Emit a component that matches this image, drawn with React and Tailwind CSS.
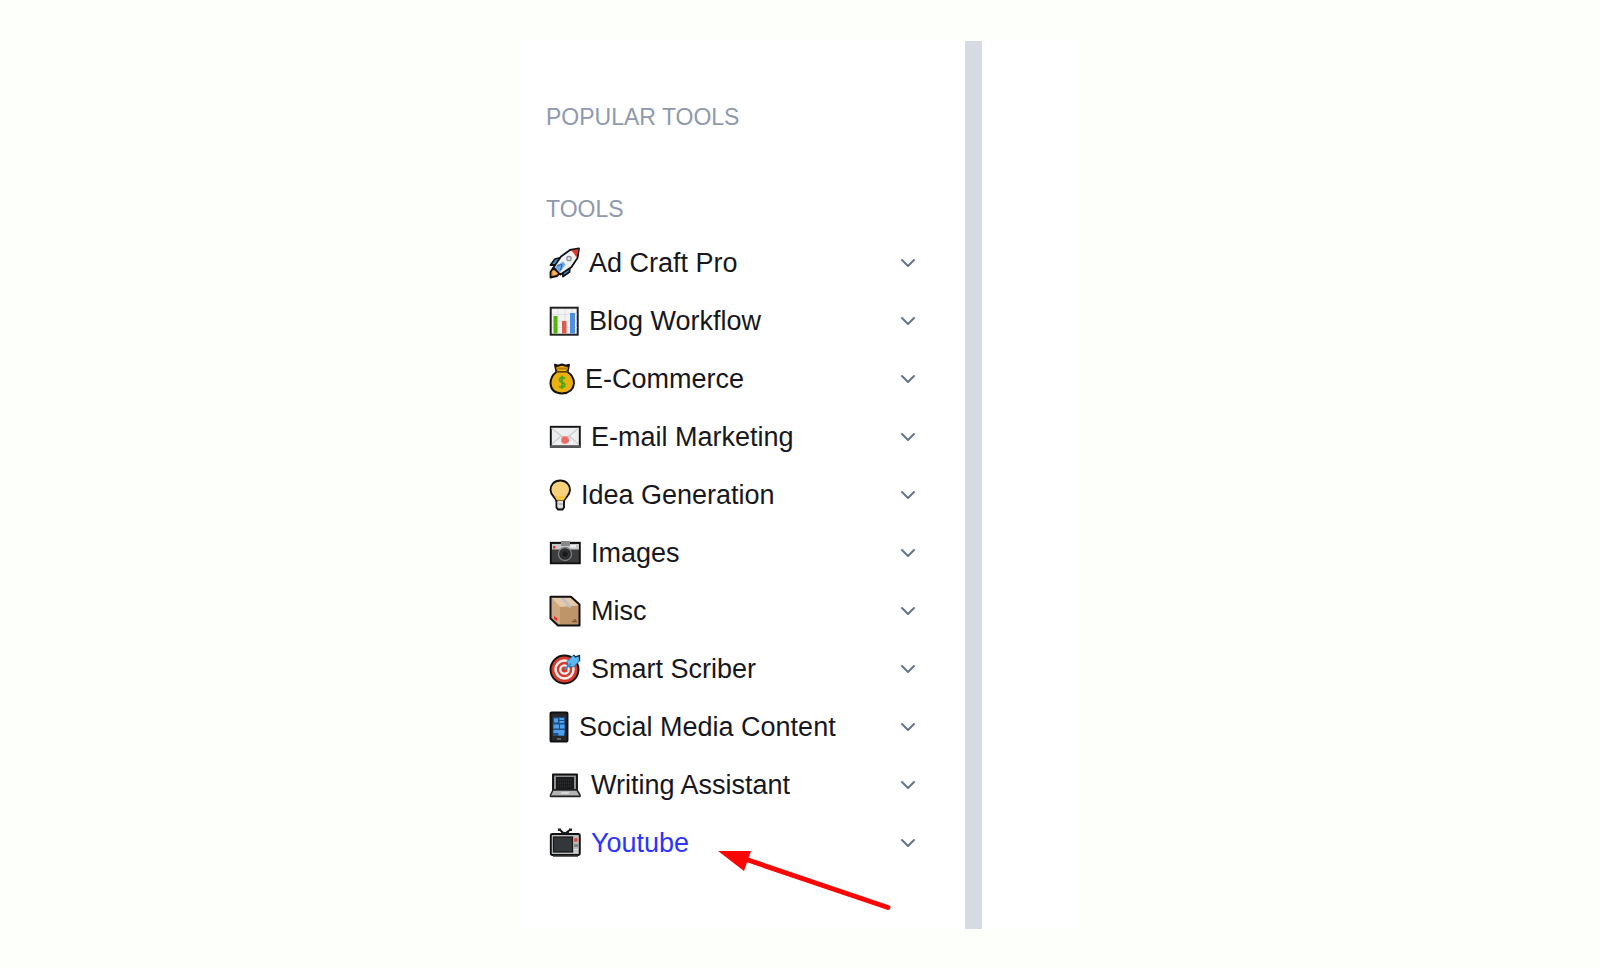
import React from "react";
import { ChevronDown } from "lucide-react";

function Rocket() {
  return (
    <svg aria-hidden="true" className="h-8 w-[31px] shrink-0" viewBox="0 0 31 32" strokeLinejoin="round">
      <path d="M4 21 L1.500 25 L1.500 30.500 L8 29 L11 26 Z" fill="#f08a24" stroke="#111" strokeWidth="1.800" />
      <path d="M3.500 24.500 L6 24 L8 27 L4 28Z" fill="#ffc24a" />
      <path d="M12 10.500 L6 12 L1.500 18 L8 18 Z M21 19 L20.500 25 L14 29.500 L13.500 24 Z" fill="#4a92e4" stroke="#111" strokeWidth="1.800" />
      <path d="M30 1.500 L21 3 L12 9.500 L4.500 20.500 L11.500 27.500 L22.500 20 L28.500 11 Z" fill="#f0f1f2" stroke="#111" strokeWidth="1.800" />
      <path d="M29.500 2 L22 3.500 Q25 6 27.500 10.500 Z" fill="#d8392c" />
      <path d="M6 20 L14 14.500 L16.500 17.500 L10.500 26Z" fill="#6aa9ec" />
      <path d="M8 18.500 L13 17.500 L11.500 23" fill="none" stroke="#265e9e" strokeWidth="1" />
      <circle cx="20" cy="11.500" r="2.200" fill="#dfe1e3" stroke="#8d9197" strokeWidth="1.300" />
    </svg>
  );
}

function Chart() {
  return (
    <svg aria-hidden="true" className="h-8 w-[31px] shrink-0" viewBox="0 0 31 32">
      <rect x="1.700" y="2.700" width="27" height="27" fill="#f3f3f4" stroke="#222" strokeWidth="2" />
      <path d="M3 9.500H28M3 16H28M3 22.500H28M9 4V29M16 4V29M23 4V29" stroke="#dedfe1" strokeWidth="1" />
      <rect x="4.500" y="11" width="4" height="17.500" fill="#56b30b" />
      <rect x="13" y="16" width="4.500" height="12.500" fill="#dd5b4e" />
      <rect x="21" y="8" width="5" height="20.500" fill="#4f8fe0" />
    </svg>
  );
}

function MoneyBag() {
  return (
    <svg aria-hidden="true" className="h-8 w-[27px] shrink-0" viewBox="0 0 27 32">
      <path d="M6 1.800 L9 2.800 L13 1.500 L17 2.800 L20 1.800 L18.500 9 Q25 13 25 20.500 Q24 30 13 30.500 Q2 30 1.500 20.500 Q1.500 13 7.500 9 Z" fill="#edb10d" stroke="#111" strokeWidth="2" strokeLinejoin="round" />
      <path d="M7 5.500 L19 5.500" stroke="#b87b08" strokeWidth="2" />
      <path d="M7 8.800H19" stroke="#5b3f07" strokeWidth="1.600" />
      <path d="M16 15.500 Q13 13.500 10.800 15.500 Q9.800 18.500 13 19.300 Q16.500 20.200 15.500 23 Q13 25.500 10 23.200 M13 12.800V26" fill="none" stroke="#4aa818" strokeWidth="1.900" />
    </svg>
  );
}

function Mail() {
  return (
    <svg aria-hidden="true" className="h-8 w-[33px] shrink-0" viewBox="0 0 33 32">
      <rect x="1.800" y="5.800" width="29" height="20" fill="#eeeff0" stroke="#111" strokeWidth="1.900" />
      <path d="M2.500 7 L16 18 L30 7 M3 23 L12 15 M29.500 23 L20 15" fill="none" stroke="#c9cbcd" strokeWidth="1.200" />
      <path d="M1 25.500H31.500" stroke="#56585a" strokeWidth="2.600" />
      <circle cx="16" cy="19" r="4" fill="#f07c76" />
      <circle cx="16" cy="19" r="1.600" fill="none" stroke="#e2605a" strokeWidth="1.200" />
      <path d="M17.600 17.500V20Q19 21 19.500 19" fill="none" stroke="#e2605a" strokeWidth="1" />
    </svg>
  );
}

function Bulb() {
  return (
    <svg aria-hidden="true" className="h-8 w-[23px] shrink-0" viewBox="0 0 23 32">
      <path d="M7.500 22V28.500L9 30.500H13.500L15 28.500V22Z" fill="#cfd1d4" stroke="#111" strokeWidth="1.900" />
      <path d="M11.300 1.500 C5 1.500 1.500 6 1.500 11 C1.500 16.500 6.500 18 7.500 22H15C16 18 21 16.500 21 11C21 6 17.500 1.500 11.300 1.500Z" fill="#f8d27a" stroke="#111" strokeWidth="1.900" />
      <path d="M5 16 Q11 19 18 16 L14.500 21.500H8Z" fill="#f8c63c" />
      <path d="M8.500 22H14V28H8.500Z" fill="#e3e4e6" />
      <path d="M8.500 25H14" stroke="#9b9fa4" strokeWidth="1" />
    </svg>
  );
}

function Camera() {
  return (
    <svg aria-hidden="true" className="h-8 w-[33px] shrink-0" viewBox="0 0 33 32">
      <rect x="12" y="4" width="9" height="4" fill="#77797b" />
      <rect x="1.800" y="5.800" width="29" height="20.500" fill="#3b3d3f" stroke="#111" strokeWidth="1.900" />
      <rect x="3" y="7" width="27" height="5.500" fill="#c5c7c9" />
      <rect x="4" y="9" width="2.500" height="2.500" fill="#db372d" />
      <rect x="12" y="4" width="9" height="5" fill="#87898b" />
      <rect x="21" y="8" width="6" height="2.500" fill="#eeeeee" />
      <circle cx="16" cy="17" r="6.500" fill="#292b2d" stroke="#808284" strokeWidth="1.300" />
      <circle cx="16" cy="17" r="3.500" fill="#17191a" stroke="#383b3e" strokeWidth="1" />
    </svg>
  );
}

function Box() {
  return (
    <svg aria-hidden="true" className="h-8 w-[33px] shrink-0" viewBox="0 0 33 32" strokeLinejoin="round">
      <path d="M1.500 1.800H22L30.500 9.500V30.500H9L1.500 23.500Z" fill="#bd9569" />
      <path d="M2 2.500H21.500L30 10.500L11 12Z" fill="#e5caaa" />
      <path d="M2 2.500L11 12V30L2 23Z" fill="#cda983" />
      <path d="M11.500 2.500H14.500L21.500 10.500V13.500L18.500 11.500Z" fill="#bfc0c4" />
      <path d="M5 21L8 23V26L5 24Z" fill="#ee2e28" />
      <path d="M23 26.500H28M26 24V27" stroke="#7d593a" strokeWidth="1.500" />
      <path d="M1.500 1.800H22L30.500 9.500V30.500H9L1.500 23.500Z" fill="none" stroke="#111" strokeWidth="2" />
    </svg>
  );
}

function Target() {
  return (
    <svg aria-hidden="true" className="h-8 w-[33px] shrink-0" viewBox="0 0 33 32">
      <circle cx="15.500" cy="16.500" r="14" fill="#d93a2b" stroke="#111" strokeWidth="1.900" />
      <circle cx="15.500" cy="16.500" r="9" fill="none" stroke="#f4f1ef" strokeWidth="2.500" />
      <circle cx="15.500" cy="16.500" r="4.200" fill="#d93a2b" stroke="#f4f1ef" strokeWidth="2.300" />
      <path d="M18.500 13.500L18 8.500L24.500 2L26.500 4L30.500 2.500V8L24.500 14Z" fill="#5bb8f3" stroke="#25689f" strokeWidth="1" />
      <path d="M24.500 2L26.500 4L30.500 2.500V8" fill="none" stroke="#16344d" strokeWidth="1.400" />
      <path d="M15.500 16.500L22 10.500" stroke="#3c8fcd" strokeWidth="2" />
    </svg>
  );
}

function Phone() {
  return (
    <svg aria-hidden="true" className="h-8 w-[21px] shrink-0" viewBox="0 0 21 32">
      <rect x="1.500" y="1.500" width="17" height="29" rx="1" fill="#26292c" stroke="#111" strokeWidth="1.900" />
      <rect x="4" y="6" width="12" height="19" fill="#1f4f83" />
      <path d="M5 7.500H9V11.500H5ZM10.500 7H15V9H10.500ZM10.500 10H15V12H10.500ZM4.500 13.500H10V17.500H4.500ZM11 13.500H15.500V17.500H11ZM4.500 19H15.500V22H4.500ZM9.500 22H15V24.500H9.500Z" fill="#4ca0ee" />
      <path d="M8 28H12" stroke="#777" strokeWidth="1.500" />
    </svg>
  );
}

function Laptop() {
  return (
    <svg aria-hidden="true" className="h-8 w-[33px] shrink-0" viewBox="0 0 33 32" strokeLinejoin="round">
      <path d="M4 5.500H28V21H4Z" fill="#8c8e90" stroke="#111" strokeWidth="1.900" />
      <rect x="7" y="8" width="18" height="12" fill="#191b1d" />
      <path d="M9 11H23M9 14H23M9 17H23" stroke="#3c3f42" strokeWidth="1" strokeDasharray="1 1" />
      <path d="M4 21H28L31 26V27.500H1.500V26Z" fill="#b3b5b7" stroke="#222" strokeWidth="1.500" />
      <path d="M2 26.500H30" stroke="#656769" strokeWidth="1" />
      <path d="M12 24H20" stroke="#eeeeee" strokeWidth="1.200" />
    </svg>
  );
}

function Television() {
  return (
    <svg aria-hidden="true" className="h-8 w-[33px] shrink-0" viewBox="0 0 33 32">
      <path d="M10.500 2.500L15.500 7L21.500 2.500" fill="none" stroke="#151515" strokeWidth="2" />
      <path d="M9 1.500H12V4H9ZM20 1.500H23V4H20ZM12 5H20V8H12Z" fill="#222" />
      <rect x="1.800" y="7" width="29" height="21" rx="1.500" fill="#b8babc" stroke="#111" strokeWidth="1.900" />
      <rect x="4.500" y="10" width="19" height="15" fill="#343739" stroke="#171819" strokeWidth="1.200" />
      <circle cx="26.800" cy="13" r="1.900" fill="#e64c2e" />
      <rect x="25" y="17" width="4" height="3" fill="#818385" />
      <path d="M25 22.500H29M25 25H29" stroke="#e4e5e6" strokeWidth="1" />
      <path d="M4 29H29" stroke="#333" strokeWidth="1.500" />
    </svg>
  );
}

const tools = [
  { name: "Ad Craft Pro", Icon: Rocket },
  { name: "Blog Workflow", Icon: Chart },
  { name: "E-Commerce", Icon: MoneyBag },
  { name: "E-mail Marketing", Icon: Mail },
  { name: "Idea Generation", Icon: Bulb },
  { name: "Images", Icon: Camera },
  { name: "Misc", Icon: Box },
  { name: "Smart Scriber", Icon: Target },
  { name: "Social Media Content", Icon: Phone },
  { name: "Writing Assistant", Icon: Laptop },
  { name: "Youtube", Icon: Television, active: true },
];

function ToolRow({ name, Icon, active }) {
  return (
    <li className="relative">
      <button
        type="button"
        aria-expanded="false"
        className="flex h-[58px] w-full items-center gap-[9px] pr-[45px] pl-[29px] text-left text-[27px] leading-8"
      >
        <Icon />
        <span className={active ? "text-[#2b35ff]" : "text-[#17171c]"}>{name}</span>
        <ChevronDown aria-hidden="true" className="ml-auto size-6 shrink-0 text-[#66748c]" strokeWidth={2} />
      </button>
      {active && (
        <svg
          aria-hidden="true"
          className="pointer-events-none absolute top-9 left-[197px] h-[62px] w-[176px]"
          viewBox="0 0 176 62"
        >
          <path d="M28 9L171 57.500" stroke="#fb0505" strokeWidth="5" strokeLinecap="round" />
          <path d="M1 1H34L27 21Z" fill="#fb0505" />
        </svg>
      )}
    </li>
  );
}

export default function App() {
  return (
    <main className="flex min-h-screen justify-center bg-[#fdfffa] pt-[41px] pb-10 font-['Liberation_Sans',Arial,sans-serif]">
      <div className="flex w-full max-w-[560px] bg-white">
        <nav aria-label="Tools" className="min-w-0 flex-1 pt-[60px]">
          <h2 className="pl-[26px] text-[23px] leading-8 text-[#8f99ad]">POPULAR TOOLS</h2>
          <h2 className="mt-[60px] pl-[26px] text-[23px] leading-8 text-[#8f99ad]">TOOLS</h2>
          <ul className="mt-[9px]">
            {tools.map((tool) => (
              <ToolRow key={tool.name} {...tool} />
            ))}
          </ul>
        </nav>
        <div className="w-[17px] shrink-0 bg-[#d6dae3]" />
        <div className="w-[98px] shrink-0" />
      </div>
    </main>
  );
}
